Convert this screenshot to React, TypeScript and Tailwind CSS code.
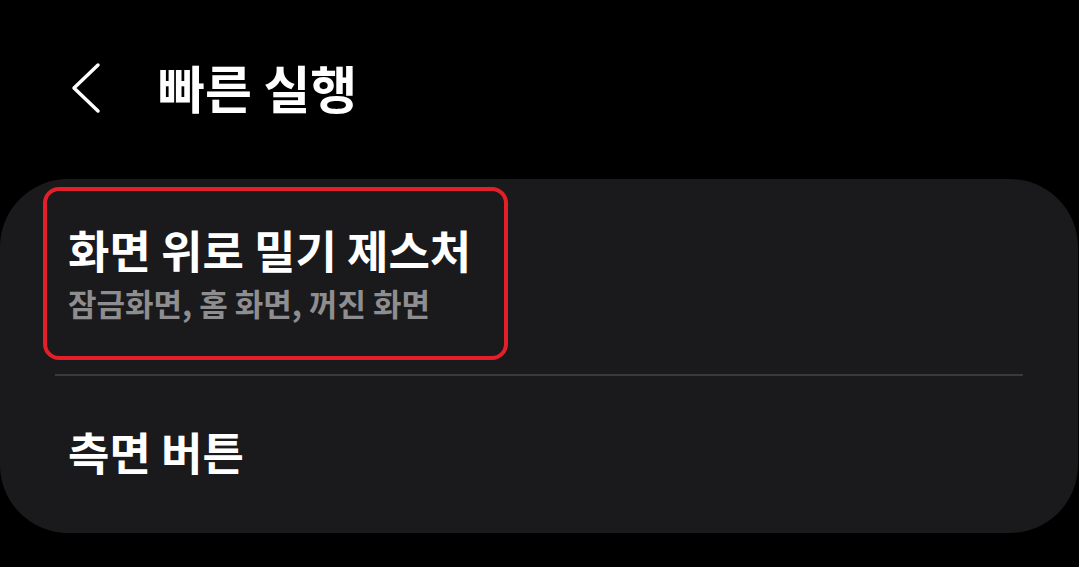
import React from "react";

export default function App() {
  const font = { fontFamily: '"Noto Sans CJK KR", "Noto Sans", sans-serif' };
  return (
    <div className="w-[1079px] h-[567px] bg-black overflow-hidden text-white" style={font}>
      <div className="flex items-center h-[179px] pb-[4px]">
        <div className="w-[158px] flex items-center pl-[70px]">
          <svg width="32" height="52" viewBox="0 0 32 52" fill="none">
            <path d="M28 3 L4 26 L28 49" stroke="white" strokeWidth="3.5" strokeLinecap="round" strokeLinejoin="round" />
          </svg>
        </div>
        <div className="text-[51px] font-bold leading-none">빠른 실행</div>
      </div>
      <div className="w-[1078px] h-[354px] bg-[#1a1a1c] rounded-[68px] flex flex-col">
        <div className="h-[195px] flex items-start pt-[8px] pl-[43px]">
          <div className="w-[465px] h-[173px] border-[4px] border-[#e3202a] rounded-[16px] flex flex-col justify-center pl-[21px]">
            <div className="text-[45px] font-bold leading-[1.1] -mt-[2px]">화면 위로 밀기 제스처</div>
            <div className="text-[31px] font-bold leading-[1.1] text-[#8e8e90] mt-[12px]">잠금화면, 홈 화면, 꺼진 화면</div>
          </div>
        </div>
        <div className="mx-[55px] h-[2px] bg-[#3a3a3c]" />
        <div className="flex-1 flex items-center pl-[68px] pb-[6px]">
          <div className="text-[45px] font-bold leading-none">측면 버튼</div>
        </div>
      </div>
    </div>
  );
}
